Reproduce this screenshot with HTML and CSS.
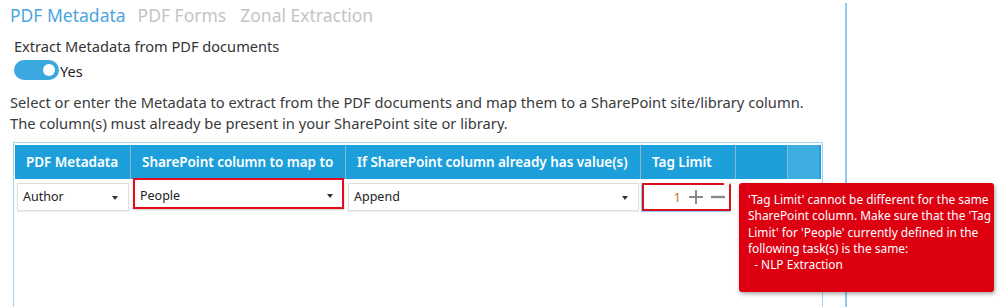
FILE: index.html
```html
<!DOCTYPE html>
<html>
<head>
<meta charset="utf-8">
<link rel="stylesheet" href="styles.css">
</head>
<body>
<div class="page">
  <div class="main">
    <nav class="tabs">
      <span class="tab active">PDF Metadata</span>
      <span class="tab">PDF Forms</span>
      <span class="tab">Zonal Extraction</span>
    </nav>
    <div class="field-label">Extract Metadata from PDF documents</div>
    <div class="toggle-row">
      <span class="toggle"><span class="knob"></span></span>
      <span class="toggle-text">Yes</span>
    </div>
    <p class="desc">Select or enter the Metadata to extract from the PDF documents and map them to a SharePoint site/library column.<br>The column(s) must already be present in your SharePoint site or library.</p>
    <div class="grid">
      <div class="grid-inner">
        <div class="head">
          <div class="hc c1">PDF Metadata</div>
          <div class="hc c2">SharePoint column to map to</div>
          <div class="hc c3">If SharePoint column already has value(s)</div>
          <div class="hc c4">Tag Limit</div>
          <div class="hc c5"></div>
          <div class="hc c6"></div>
        </div>
        <div class="row">
          <div class="cell c1"><div class="combo">Author<span class="arrow"></span></div></div>
          <div class="cell c2"><div class="combo error">People<span class="arrow"></span></div></div>
          <div class="cell c3"><div class="combo">Append<span class="arrow"></span></div></div>
          <div class="cell c4">
            <div class="spin">
              <span class="num">1</span>
              <svg class="ic" width="16" height="16" viewBox="0 0 16 16"><path d="M8 1v14M1 8h14" stroke="#8a8a8a" stroke-width="2"/></svg>
              <svg class="ic" width="16" height="16" viewBox="0 0 16 16"><path d="M1 8h14" stroke="#8a8a8a" stroke-width="2.4"/></svg>
              <span class="corner"></span>
            </div>
            <div class="tooltip">'Tag Limit' cannot be different for the same<br>SharePoint column. Make sure that the 'Tag<br>Limit' for 'People' currently defined in the<br>following task(s) is the same:<br>&nbsp;&nbsp;- NLP Extraction</div>
          </div>
        </div>
      </div>
    </div>
  </div>
</div>
</body>
</html>
```
FILE: styles.css
```css
html, body { margin: 0; padding: 0; background: #fff; }
body { font-family: "Noto Sans", "Open Sans", sans-serif; color: #333; width: 1005px; height: 307px; overflow: hidden; }
.page { display: flex; height: 307px; padding-top: 3px; box-sizing: border-box; }
.main { width: 845px; border-right: 2px solid #8ecdf0; display: flex; flex-direction: column; }
.tabs { display: flex; gap: 12px; padding-left: 10px; margin-top: 0px; font-size: 17.5px; line-height: 25px; }
.tab { color: #c4c4c4; }
.tab.active { color: #4ba6dd; }
.tabs .tab:nth-child(3) { margin-left: 2px; }
.field-label { margin: 9px 0 0 14px; font-size: 14.6px; line-height: 18px; color: #333; }
.toggle-row { display: flex; align-items: center; margin: 4px 0 0 14px; height: 21px; }
.toggle { width: 45px; height: 20px; border-radius: 10px; background: #3aa8df; position: relative; }
.knob { position: absolute; right: 4px; top: 4px; width: 12px; height: 12px; border-radius: 50%; background: #fff; }
.toggle-text { font-size: 14.5px; margin-left: 1px; margin-top: 3px; color: #222; }
.desc { margin: 12px 0 0 10px; font-size: 14.7px; line-height: 21px; color: #3a3a3a; }
.grid { margin: 8px 0 0 13px; width: 806px; flex: 1; border: 1px solid #9fd6f1; border-bottom: none; padding: 2px 1px 0 1px; }
.grid-inner { position: relative; }
.head { display: flex; height: 34px; background: #1c9fdb; }
.hc { color: #fff; font-weight: 600; font-size: 13.5px; line-height: 34px; padding-left: 11px; box-sizing: border-box; border-right: 1px solid #8db6cc; white-space: nowrap; letter-spacing: -0.03px; }
.c1 { width: 116px; }
.c2 { width: 215px; }
.c3 { width: 295px; }
.c4 { width: 95px; }
.c5 { width: 52px; }
.c6 { width: 31px; border-right: none; background: #3eaee0; }
.row { display: flex; height: 40px; }
.cell { padding: 4px 2px 0 2px; box-sizing: border-box; position: relative; }
.combo { height: 28px; border: 1px solid #dedede; box-sizing: border-box; background: #fff; font-size: 12.5px; line-height: 26px; padding-left: 5px; position: relative; color: #222; box-shadow: 0 1px 1px rgba(0,0,0,0.08); }
.combo.error { border: 2px solid #e60b1c; margin-top: -5px; height: 31px; line-height: 24px; padding: 4px 0 0 5px; box-shadow: 0 1px 2px rgba(0,0,0,0.2); }
.arrow { position: absolute; right: 10px; top: 12px; width: 0; height: 0; border-left: 3.5px solid transparent; border-right: 3.5px solid transparent; border-top: 4px solid #333; }
.combo.error .arrow { right: 9px; top: 14px; }
.cell.c4 { padding: 4px 5px 0 1px; }
.spin { height: 28px; border: 2px solid #d8101f; box-sizing: border-box; display: flex; align-items: center; justify-content: flex-end; gap: 6px; padding-right: 3px; position: relative; box-shadow: -1px 1px 0 #8ccff0; }
.num { font-size: 13px; color: #c07b1a; margin-right: 1px; }
.ic { display: block; }
.corner { position: absolute; right: -2px; top: -2px; width: 0; height: 0; border-left: 7px solid #f2f2f2; border-bottom: 7px solid transparent; }
.tooltip { position: absolute; left: 98px; top: 4px; width: 255px; height: 109px; box-sizing: border-box; background: #dc0010; color: #fff; border-radius: 3px; box-shadow: 1px 2px 4px rgba(0,0,0,0.35); padding: 8px 6px 0 9px; font-size: 11.9px; line-height: 16.3px; white-space: nowrap; z-index: 5; }
```
